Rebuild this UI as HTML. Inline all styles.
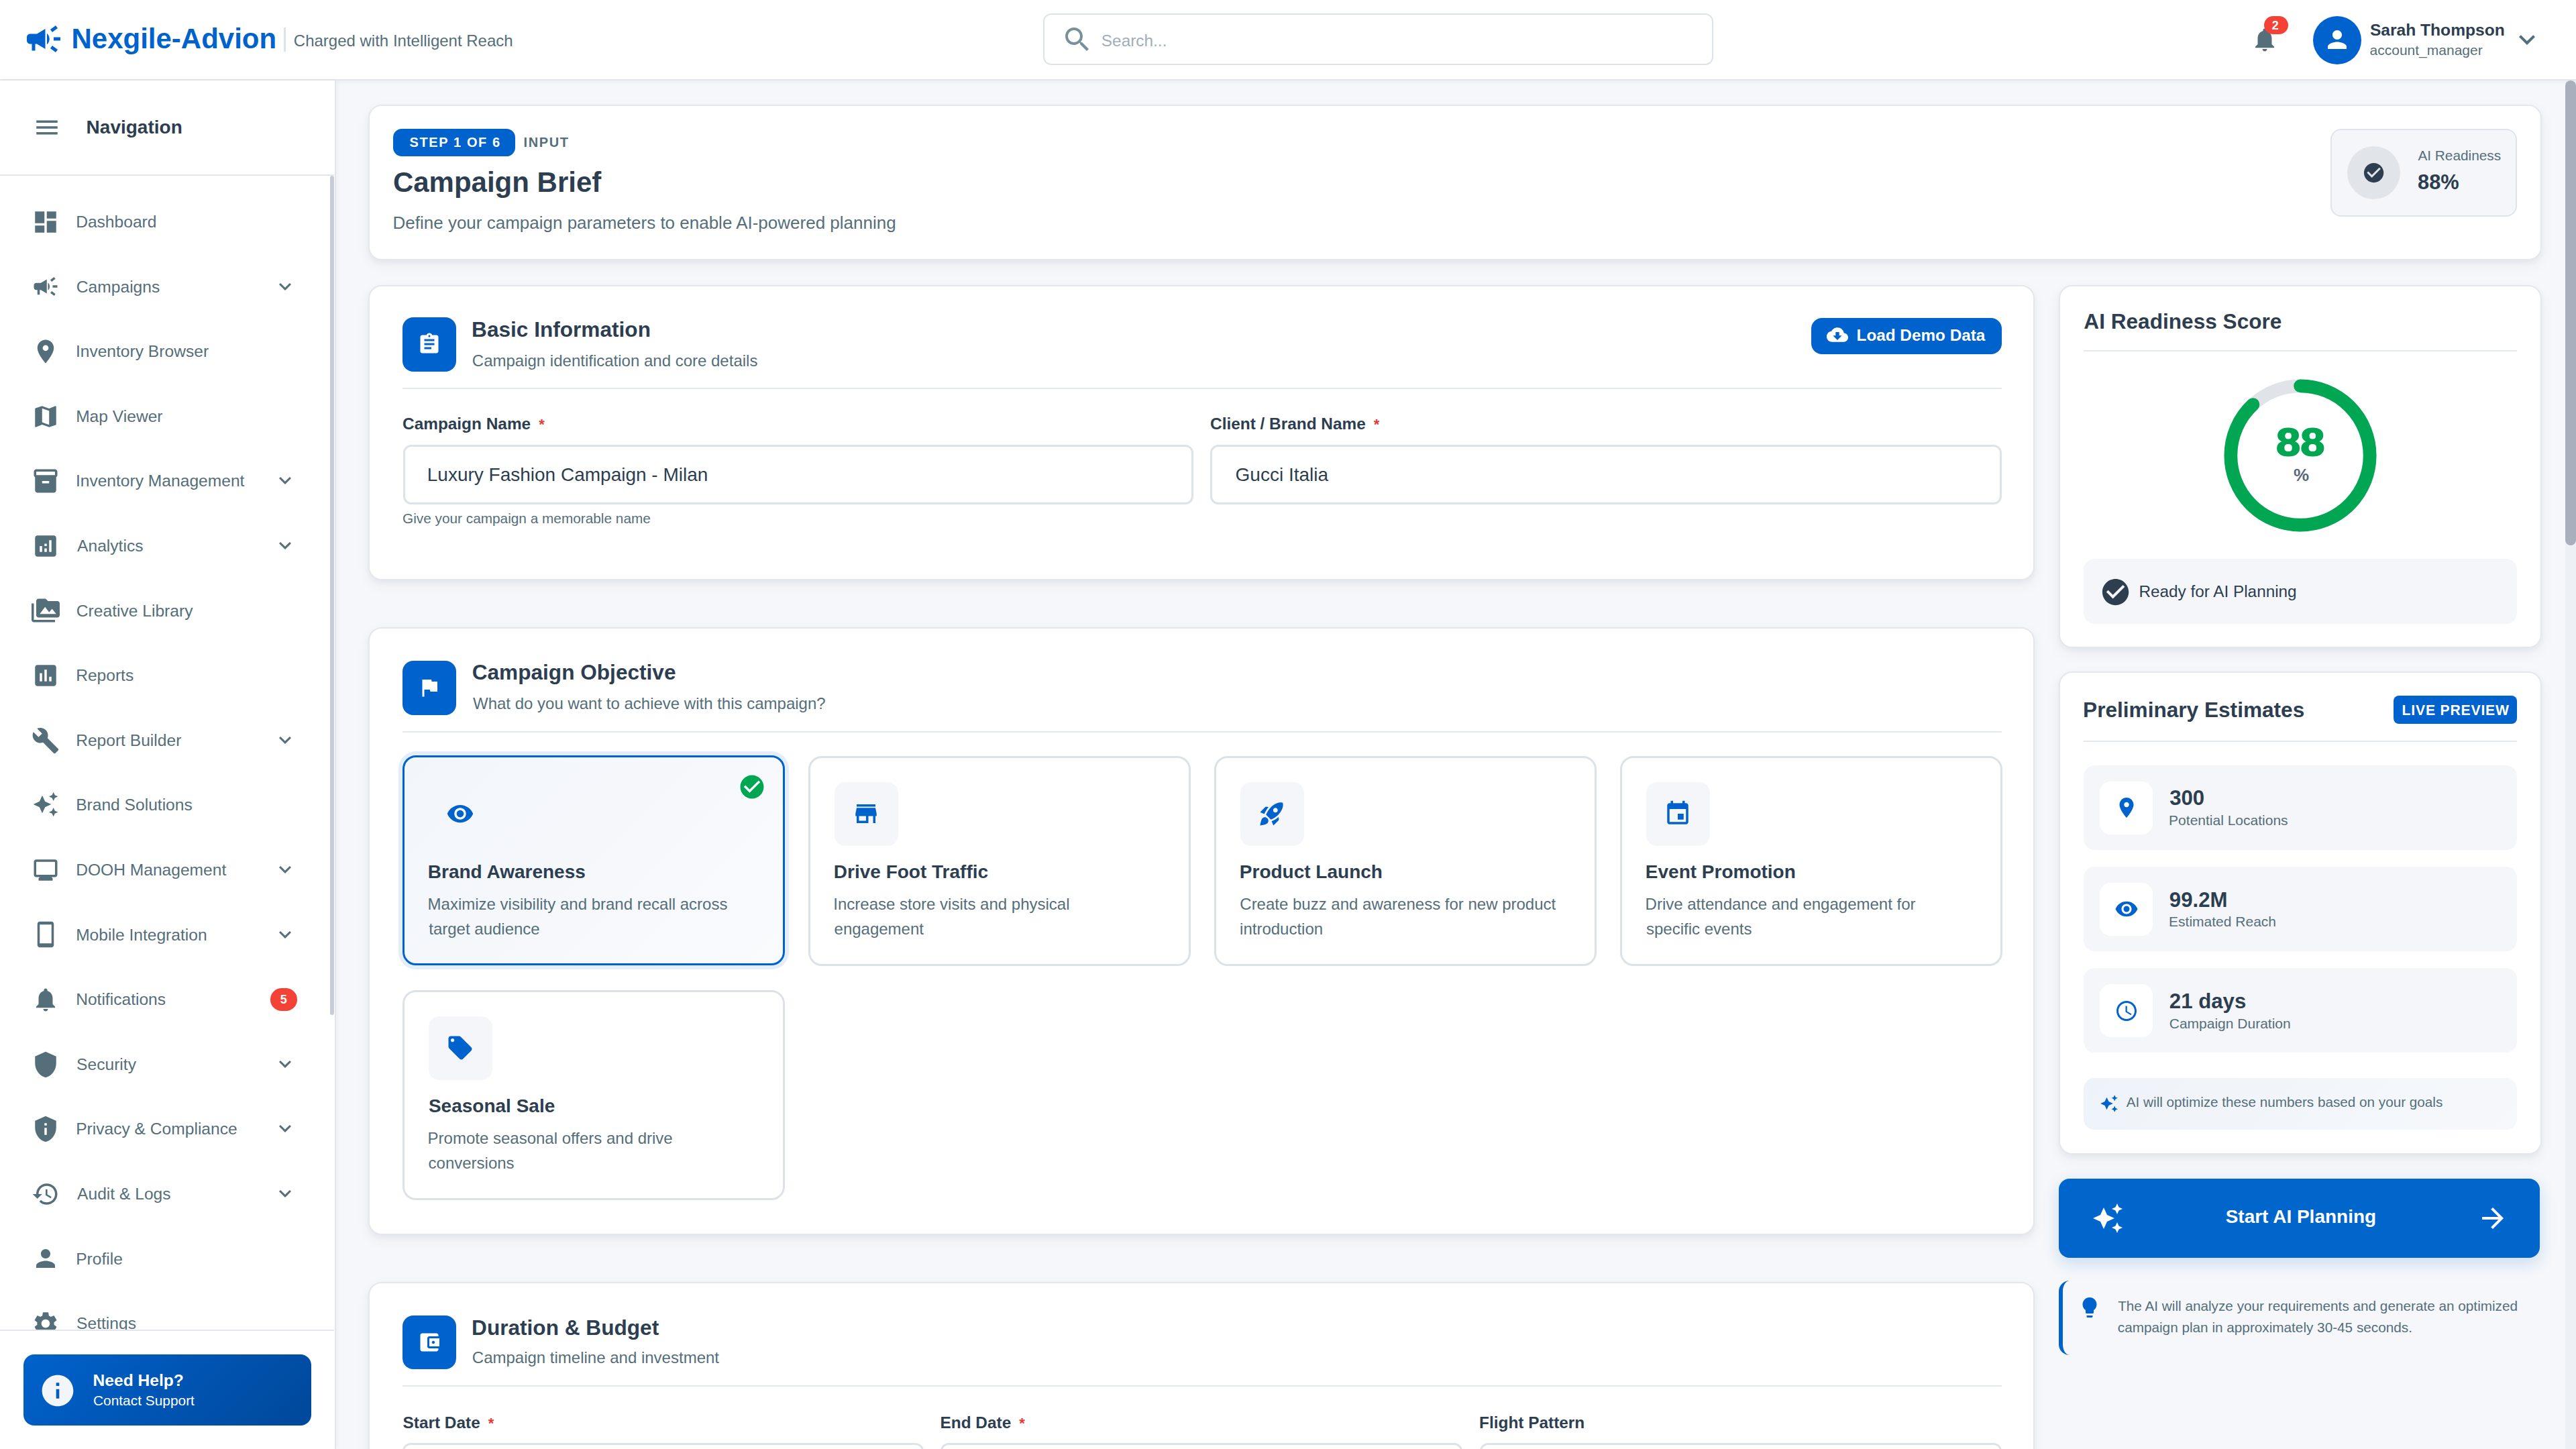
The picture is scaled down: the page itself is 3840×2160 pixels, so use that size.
<!DOCTYPE html>
<html><head><meta charset="utf-8">
<style>
@media (min-width: 3000px) { html { zoom: 2; } }
*{box-sizing:border-box;margin:0;padding:0}
html,body{width:1920px;height:1080px;overflow:hidden}
body{font-family:"Liberation Sans",sans-serif;background:#f5f7fa;position:relative}
svg{display:block}
</style></head><body>
<div style="position:absolute;left:0.00px;top:0.00px;width:1920.00px;height:60.00px;background:#fff;border-bottom:1px solid #e2e6ec;box-shadow:0 1px 4px rgba(40,50,70,.05)"></div>
<svg style="position:absolute;left:17.40px;top:14.00px" width="30" height="30" viewBox="0 0 24 24" fill="#0062cc"><path d="M18 11v2h4v-2h-4zm-2 6.61c.96.71 2.21 1.65 3.2 2.39.4-.53.8-1.07 1.2-1.6-.99-.74-2.24-1.68-3.2-2.4-.4.54-.8 1.08-1.2 1.61zM20.4 5.6c-.4-.53-.8-1.07-1.2-1.6-.99.74-2.24 1.68-3.2 2.4.4.53.8 1.07 1.2 1.6.96-.72 2.21-1.65 3.2-2.4zM4 9c-1.1 0-2 .9-2 2v2c0 1.1.9 2 2 2h1v4h2v-4h1l5 3V6L8 9H4zm11.5 3c0-1.33-.58-2.53-1.5-3.35v6.69c.92-.81 1.5-2.01 1.5-3.34z"/></svg>
<div style="position:absolute;left:53.24px;top:18.72px;font-size:21.0px;line-height:21.0px;font-weight:700;color:#0062cc;white-space:nowrap;">Nexgile-Advion</div>
<div style="position:absolute;left:211.60px;top:20.60px;width:1.20px;height:17.80px;background:#dde3e7"></div>
<div style="position:absolute;left:218.90px;top:24.34px;font-size:12.0px;line-height:12.0px;font-weight:400;color:#546e7a;white-space:nowrap;">Charged with Intelligent Reach</div>
<div style="position:absolute;left:777.70px;top:10.00px;width:499.20px;height:38.70px;background:#fff;border:1px solid #dde3ea;border-radius:6px"></div>
<svg style="position:absolute;left:791.20px;top:17.30px" width="24" height="24" viewBox="0 0 24 24" fill="#78909c"><path d="M15.5 14h-.79l-.28-.27C15.41 12.59 16 11.11 16 9.5 16 5.91 13.09 3 9.5 3S3 5.91 3 9.5 5.91 16 9.5 16c1.61 0 3.09-.59 4.23-1.57l.27.28v.79l5 4.99L20.49 19l-4.99-5zm-6 0C7.01 14 5 11.99 5 9.5S7.01 5 9.5 5 14 7.01 14 9.5 11.99 14 9.5 14z"/></svg>
<div style="position:absolute;left:820.91px;top:24.67px;font-size:12.2px;line-height:12.2px;font-weight:400;color:#a0aeb9;white-space:nowrap;">Search...</div>
<svg style="position:absolute;left:1677.40px;top:18.90px" width="21" height="21" viewBox="0 0 24 24" fill="#546e7a"><path d="M12 22c1.1 0 2-.9 2-2h-4c0 1.1.89 2 2 2zm6-6v-5c0-3.07-1.64-5.64-4.5-6.32V4c0-.83-.67-1.5-1.5-1.5s-1.5.67-1.5 1.5v.68C7.63 5.36 6 7.92 6 11v5l-2 2v1h16v-1l-2-2z"/></svg>
<div style="position:absolute;left:1687.30px;top:12.00px;width:18.30px;height:13.40px;background:#f44336;border-radius:7px"></div>
<div style="position:absolute;left:1693.43px;top:14.68px;font-size:9.0px;line-height:9.0px;font-weight:700;color:#fff;white-space:nowrap;">2</div>
<div style="position:absolute;left:1724.00px;top:12.00px;width:36.00px;height:36.00px;background:#0062cc;border-radius:50%"></div>
<svg style="position:absolute;left:1731.50px;top:19.00px" width="21" height="21" viewBox="0 0 24 24" fill="#fff"><path d="M12 12c2.21 0 4-1.79 4-4s-1.79-4-4-4-4 1.79-4 4 1.79 4 4 4zm0 2c-2.67 0-8 1.34-8 4v2h16v-2c0-2.66-5.33-4-8-4z"/></svg>
<div style="position:absolute;left:1766.45px;top:16.69px;font-size:12.3px;line-height:12.3px;font-weight:700;color:#2c3e50;white-space:nowrap;">Sarah Thompson</div>
<div style="position:absolute;left:1766.28px;top:31.91px;font-size:10.5px;line-height:10.5px;font-weight:400;color:#546e7a;white-space:nowrap;">account_manager</div>
<svg style="position:absolute;left:1871.70px;top:17.70px" width="24" height="24" viewBox="0 0 24 24" fill="#546e7a"><path d="M16.59 8.59 12 13.17 7.41 8.59 6 10l6 6 6-6z"/></svg>
<div style="position:absolute;left:0.00px;top:60.00px;width:250.50px;height:1020.00px;background:#fff;border-right:1px solid #e2e5ec;box-shadow:1px 0 4px rgba(30,40,60,.04)"></div>
<div style="position:absolute;left:0.00px;top:130.00px;width:249.00px;height:1.00px;background:#e3e7ed"></div>
<svg style="position:absolute;left:24.40px;top:84.50px" width="21" height="21" viewBox="0 0 24 24" fill="#546e7a"><path d="M3 18h18v-2H3v2zm0-5h18v-2H3v2zm0-7v2h18V6H3z"/></svg>
<div style="position:absolute;left:64.31px;top:88.15px;font-size:14.0px;line-height:14.0px;font-weight:700;color:#2c3e50;white-space:nowrap;">Navigation</div>
<div style="position:absolute;left:0;top:131px;width:249px;height:860px;overflow:hidden">
<svg style="position:absolute;left:23.60px;top:23.90px" width="21" height="21" viewBox="0 0 24 24" fill="#546e7a"><path d="M3 13h8V3H3v10zm0 8h8v-6H3v6zm10 0h8V11h-8v10zm0-18v6h8V3h-8z"/></svg>
<div style="position:absolute;left:56.57px;top:28.49px;font-size:12.3px;line-height:12.3px;font-weight:400;color:#546e7a;white-space:nowrap;">Dashboard</div>
<svg style="position:absolute;left:23.60px;top:72.20px" width="21" height="21" viewBox="0 0 24 24" fill="#546e7a"><path d="M18 11v2h4v-2h-4zm-2 6.61c.96.71 2.21 1.65 3.2 2.39.4-.53.8-1.07 1.2-1.6-.99-.74-2.24-1.68-3.2-2.4-.4.54-.8 1.08-1.2 1.61zM20.4 5.6c-.4-.53-.8-1.07-1.2-1.6-.99.74-2.24 1.68-3.2 2.4.4.53.8 1.07 1.2 1.6.96-.72 2.21-1.65 3.2-2.4zM4 9c-1.1 0-2 .9-2 2v2c0 1.1.9 2 2 2h1v4h2v-4h1l5 3V6L8 9H4zm11.5 3c0-1.33-.58-2.53-1.5-3.35v6.69c.92-.81 1.5-2.01 1.5-3.34z"/></svg>
<div style="position:absolute;left:56.93px;top:76.79px;font-size:12.3px;line-height:12.3px;font-weight:400;color:#546e7a;white-space:nowrap;">Campaigns</div>
<svg style="position:absolute;left:203.70px;top:73.30px" width="18" height="18" viewBox="0 0 24 24" fill="#546e7a"><path d="M16.59 8.59 12 13.17 7.41 8.59 6 10l6 6 6-6z"/></svg>
<svg style="position:absolute;left:23.60px;top:120.50px" width="21" height="21" viewBox="0 0 24 24" fill="#546e7a"><path d="M12 2C8.13 2 5 5.13 5 9c0 5.25 7 13 7 13s7-7.75 7-13c0-3.87-3.13-7-7-7zm0 9.5c-1.38 0-2.5-1.12-2.5-2.5s1.12-2.5 2.5-2.5 2.5 1.12 2.5 2.5-1.12 2.5-2.5 2.5z"/></svg>
<div style="position:absolute;left:56.44px;top:125.09px;font-size:12.3px;line-height:12.3px;font-weight:400;color:#546e7a;white-space:nowrap;">Inventory Browser</div>
<svg style="position:absolute;left:23.60px;top:168.80px" width="21" height="21" viewBox="0 0 24 24" fill="#546e7a"><path d="M20.5 3l-.16.03L15 5.1 9 3 3.36 4.9c-.21.07-.36.25-.36.48V20.5c0 .28.22.5.5.5l.16-.03L9 18.9l6 2.1 5.64-1.9c.21-.07.36-.25.36-.48V3.5c0-.28-.22-.5-.5-.5zM15 19l-6-2.11V5l6 2.11V19z"/></svg>
<div style="position:absolute;left:56.57px;top:173.39px;font-size:12.3px;line-height:12.3px;font-weight:400;color:#546e7a;white-space:nowrap;">Map Viewer</div>
<svg style="position:absolute;left:23.60px;top:217.10px" width="21" height="21" viewBox="0 0 24 24" fill="#546e7a"><path d="M20 2H4c-1 0-2 .9-2 2v3.01c0 .72.43 1.34 1 1.69V20c0 1.1 1.1 2 2 2h14c.9 0 2-.9 2-2V8.7c.57-.35 1-.97 1-1.69V4c0-1.1-1-2-2-2zm-5 12H9v-2h6v2zm5-7H4V4l16-.02V7z"/></svg>
<div style="position:absolute;left:56.44px;top:221.69px;font-size:12.3px;line-height:12.3px;font-weight:400;color:#546e7a;white-space:nowrap;">Inventory Management</div>
<svg style="position:absolute;left:203.70px;top:218.20px" width="18" height="18" viewBox="0 0 24 24" fill="#546e7a"><path d="M16.59 8.59 12 13.17 7.41 8.59 6 10l6 6 6-6z"/></svg>
<svg style="position:absolute;left:23.60px;top:265.40px" width="21" height="21" viewBox="0 0 24 24" fill="#546e7a"><path d="M19 3H5c-1.1 0-2 .9-2 2v14c0 1.1.9 2 2 2h14c1.1 0 2-.9 2-2V5c0-1.1-.9-2-2-2zM9 17H7v-5h2v5zm4 0h-2v-3h2v3zm0-5h-2v-2h2v2zm4 5h-2V7h2v10z"/></svg>
<div style="position:absolute;left:57.55px;top:269.99px;font-size:12.3px;line-height:12.3px;font-weight:400;color:#546e7a;white-space:nowrap;">Analytics</div>
<svg style="position:absolute;left:203.70px;top:266.50px" width="18" height="18" viewBox="0 0 24 24" fill="#546e7a"><path d="M16.59 8.59 12 13.17 7.41 8.59 6 10l6 6 6-6z"/></svg>
<svg style="position:absolute;left:23.60px;top:313.70px" width="21" height="21" viewBox="0 0 24 24" fill="#546e7a"><path d="M2 6H0v5h.01L0 20c0 1.1.9 2 2 2h18v-2H2V6zm20-2h-8l-2-2H6c-1.1 0-1.99.9-1.99 2L4 16c0 1.1.9 2 2 2h16c1.1 0 2-.9 2-2V6c0-1.1-.9-2-2-2zM7 15l4.5-6 3.5 4.51 2.5-3.01L21 15H7z"/></svg>
<div style="position:absolute;left:56.93px;top:318.29px;font-size:12.3px;line-height:12.3px;font-weight:400;color:#546e7a;white-space:nowrap;">Creative Library</div>
<svg style="position:absolute;left:23.60px;top:362.00px" width="21" height="21" viewBox="0 0 24 24" fill="#546e7a"><path d="M19 3H5c-1.1 0-2 .9-2 2v14c0 1.1.9 2 2 2h14c1.1 0 2-.9 2-2V5c0-1.1-.9-2-2-2zM9 17H7v-7h2v7zm4 0h-2V7h2v10zm4 0h-2v-4h2v4z"/></svg>
<div style="position:absolute;left:56.57px;top:366.59px;font-size:12.3px;line-height:12.3px;font-weight:400;color:#546e7a;white-space:nowrap;">Reports</div>
<svg style="position:absolute;left:23.60px;top:410.30px" width="21" height="21" viewBox="0 0 24 24" fill="#546e7a"><path d="M22.7 19l-9.1-9.1c.9-2.3.4-5-1.5-6.9-2-2-5-2.4-7.4-1.3L9 6 6 9 1.6 4.7C.4 7.1.9 10.1 2.9 12.1c1.9 1.9 4.6 2.4 6.9 1.5l9.1 9.1c.4.4 1 .4 1.4 0l2.3-2.3c.5-.4.5-1.1.1-1.4z"/></svg>
<div style="position:absolute;left:56.57px;top:414.89px;font-size:12.3px;line-height:12.3px;font-weight:400;color:#546e7a;white-space:nowrap;">Report Builder</div>
<svg style="position:absolute;left:203.70px;top:411.40px" width="18" height="18" viewBox="0 0 24 24" fill="#546e7a"><path d="M16.59 8.59 12 13.17 7.41 8.59 6 10l6 6 6-6z"/></svg>
<svg style="position:absolute;left:24.00px;top:458.40px" width="20" height="20" viewBox="0 0 24 24" fill="#546e7a"><path d="M19 9l1.25-2.75L23 5l-2.75-1.25L19 1l-1.25 2.75L15 5l2.75 1.25L19 9zm-7.5.5L9 4 6.5 9.5 1 12l5.5 2.5L9 20l2.5-5.5L17 12l-5.5-2.5zM19 15l-1.25 2.75L15 19l2.75 1.25L19 23l1.25-2.75L23 19l-2.75-1.25L19 15z"/></svg>
<div style="position:absolute;left:56.57px;top:463.19px;font-size:12.3px;line-height:12.3px;font-weight:400;color:#546e7a;white-space:nowrap;">Brand Solutions</div>
<svg style="position:absolute;left:23.60px;top:506.90px" width="21" height="21" viewBox="0 0 24 24" fill="#546e7a"><path d="M20 3H4c-1.1 0-2 .9-2 2v11c0 1.1.9 2 2 2h3l-1 1v2h12v-2l-1-1h3c1.1 0 2-.9 2-2V5c0-1.1-.9-2-2-2zm0 13H4V5h16v11z"/></svg>
<div style="position:absolute;left:56.57px;top:511.49px;font-size:12.3px;line-height:12.3px;font-weight:400;color:#546e7a;white-space:nowrap;">DOOH Management</div>
<svg style="position:absolute;left:203.70px;top:508.00px" width="18" height="18" viewBox="0 0 24 24" fill="#546e7a"><path d="M16.59 8.59 12 13.17 7.41 8.59 6 10l6 6 6-6z"/></svg>
<svg style="position:absolute;left:23.60px;top:555.20px" width="21" height="21" viewBox="0 0 24 24" fill="#546e7a"><path d="M17 1.01L7 1c-1.1 0-2 .9-2 2v18c0 1.1.9 2 2 2h10c1.1 0 2-.9 2-2V3c0-1.1-.9-1.99-2-1.99zM17 19.5H7V3.5h10v16z"/></svg>
<div style="position:absolute;left:56.57px;top:559.79px;font-size:12.3px;line-height:12.3px;font-weight:400;color:#546e7a;white-space:nowrap;">Mobile Integration</div>
<svg style="position:absolute;left:203.70px;top:556.30px" width="18" height="18" viewBox="0 0 24 24" fill="#546e7a"><path d="M16.59 8.59 12 13.17 7.41 8.59 6 10l6 6 6-6z"/></svg>
<svg style="position:absolute;left:23.60px;top:603.50px" width="21" height="21" viewBox="0 0 24 24" fill="#546e7a"><path d="M12 22c1.1 0 2-.9 2-2h-4c0 1.1.89 2 2 2zm6-6v-5c0-3.07-1.64-5.64-4.5-6.32V4c0-.83-.67-1.5-1.5-1.5s-1.5.67-1.5 1.5v.68C7.63 5.36 6 7.92 6 11v5l-2 2v1h16v-1l-2-2z"/></svg>
<div style="position:absolute;left:56.57px;top:608.09px;font-size:12.3px;line-height:12.3px;font-weight:400;color:#546e7a;white-space:nowrap;">Notifications</div>
<div style="position:absolute;left:201.50px;top:605.60px;width:20.00px;height:16.80px;background:#f44336;border-radius:8.4px"></div>
<div style="position:absolute;left:208.83px;top:609.68px;font-size:9.0px;line-height:9.0px;font-weight:700;color:#fff;white-space:nowrap;">5</div>
<svg style="position:absolute;left:23.60px;top:651.80px" width="21" height="21" viewBox="0 0 24 24" fill="#546e7a"><path d="M12 1L3 5v6c0 5.55 3.84 10.74 9 12 5.16-1.26 9-6.45 9-12V5l-9-4z"/></svg>
<div style="position:absolute;left:57.06px;top:656.39px;font-size:12.3px;line-height:12.3px;font-weight:400;color:#546e7a;white-space:nowrap;">Security</div>
<svg style="position:absolute;left:203.70px;top:652.90px" width="18" height="18" viewBox="0 0 24 24" fill="#546e7a"><path d="M16.59 8.59 12 13.17 7.41 8.59 6 10l6 6 6-6z"/></svg>
<svg style="position:absolute;left:23.60px;top:700.10px" width="21" height="21" viewBox="0 0 24 24" fill="#546e7a"><path d="M12 1L3 5v6c0 5.55 3.84 10.74 9 12 5.16-1.26 9-6.45 9-12V5l-9-4zm1 16h-2v-6h2v6zm0-8h-2V7h2v2z"/></svg>
<div style="position:absolute;left:56.57px;top:704.69px;font-size:12.3px;line-height:12.3px;font-weight:400;color:#546e7a;white-space:nowrap;">Privacy &amp; Compliance</div>
<svg style="position:absolute;left:203.70px;top:701.20px" width="18" height="18" viewBox="0 0 24 24" fill="#546e7a"><path d="M16.59 8.59 12 13.17 7.41 8.59 6 10l6 6 6-6z"/></svg>
<svg style="position:absolute;left:23.60px;top:748.40px" width="21" height="21" viewBox="0 0 24 24" fill="#546e7a"><path d="M13 3c-4.97 0-9 4.03-9 9H1l3.89 3.89.07.14L9 12H6c0-3.87 3.13-7 7-7s7 3.13 7 7-3.13 7-7 7c-1.93 0-3.68-.79-4.94-2.06l-1.42 1.42C8.27 19.99 10.51 21 13 21c4.97 0 9-4.03 9-9s-4.03-9-9-9zm-1 5v5l4.28 2.54.72-1.21-3.5-2.08V8H12z"/></svg>
<div style="position:absolute;left:57.55px;top:752.99px;font-size:12.3px;line-height:12.3px;font-weight:400;color:#546e7a;white-space:nowrap;">Audit &amp; Logs</div>
<svg style="position:absolute;left:203.70px;top:749.50px" width="18" height="18" viewBox="0 0 24 24" fill="#546e7a"><path d="M16.59 8.59 12 13.17 7.41 8.59 6 10l6 6 6-6z"/></svg>
<svg style="position:absolute;left:23.60px;top:796.70px" width="21" height="21" viewBox="0 0 24 24" fill="#546e7a"><path d="M12 12c2.21 0 4-1.79 4-4s-1.79-4-4-4-4 1.79-4 4 1.79 4 4 4zm0 2c-2.67 0-8 1.34-8 4v2h16v-2c0-2.66-5.33-4-8-4z"/></svg>
<div style="position:absolute;left:56.57px;top:801.29px;font-size:12.3px;line-height:12.3px;font-weight:400;color:#546e7a;white-space:nowrap;">Profile</div>
<svg style="position:absolute;left:23.60px;top:845.00px" width="21" height="21" viewBox="0 0 24 24" fill="#546e7a"><path d="M19.14 12.94c.04-.3.06-.61.06-.94 0-.32-.02-.64-.07-.94l2.03-1.58c.18-.14.23-.41.12-.61l-1.92-3.32c-.12-.22-.37-.29-.59-.22l-2.39.96c-.5-.38-1.03-.7-1.62-.94l-.36-2.54c-.04-.24-.24-.41-.48-.41h-3.84c-.24 0-.43.17-.47.41l-.36 2.54c-.59.24-1.13.57-1.62.94l-2.39-.96c-.22-.08-.47 0-.59.22L2.74 8.87c-.12.21-.08.47.12.61l2.03 1.58c-.05.3-.09.63-.09.94s.02.64.07.94l-2.03 1.58c-.18.14-.23.41-.12.61l1.92 3.32c.12.22.37.29.59.22l2.39-.96c.5.38 1.03.7 1.62.94l.36 2.54c.05.24.24.41.48.41h3.84c.24 0 .44-.17.47-.41l.36-2.54c.59-.24 1.13-.56 1.62-.94l2.39.96c.22.08.47 0 .59-.22l1.92-3.32c.12-.22.07-.47-.12-.61l-2.01-1.58zM12 15.6c-1.98 0-3.6-1.62-3.6-3.6s1.62-3.6 3.6-3.6 3.6 1.62 3.6 3.6-1.62 3.6-3.6 3.6z"/></svg>
<div style="position:absolute;left:57.06px;top:849.59px;font-size:12.3px;line-height:12.3px;font-weight:400;color:#546e7a;white-space:nowrap;">Settings</div>
</div>
<div style="position:absolute;left:245.80px;top:131.00px;width:3.20px;height:625.50px;background:#c7ccd6;border-radius:2px"></div>
<div style="position:absolute;left:0.00px;top:991.00px;width:249.00px;height:1.00px;background:#e3e7ed"></div>
<div style="position:absolute;left:17.50px;top:1009.50px;width:214.50px;height:53.00px;border-radius:8px;background:linear-gradient(135deg,#0062cc 0%,#00489a 100%)"></div>
<svg style="position:absolute;left:29.15px;top:1022.30px" width="28" height="28" viewBox="0 0 24 24" fill="#f2f6fb"><path d="M12 2C6.48 2 2 6.48 2 12s4.48 10 10 10 10-4.48 10-10S17.52 2 12 2zm1 15h-2v-6h2v6zm0-8h-2V7h2v2z"/></svg>
<div style="position:absolute;left:69.26px;top:1022.99px;font-size:12.3px;line-height:12.3px;font-weight:700;color:#fff;white-space:nowrap;">Need Help?</div>
<div style="position:absolute;left:69.48px;top:1038.75px;font-size:10.45px;line-height:10.45px;font-weight:400;color:#fff;white-space:nowrap;">Contact Support</div>
<div style="position:absolute;left:274.70px;top:77.75px;width:1620.00px;height:116.25px;background:#fff;border:1px solid #e4e8ee;border-radius:10px;box-shadow:0 2px 4px rgba(20,30,50,.05),0 4px 12px rgba(20,30,50,.04)"></div>
<div style="position:absolute;left:292.85px;top:95.95px;width:91.25px;height:20.80px;background:#0062cc;border-radius:6.5px"></div>
<div style="position:absolute;left:305.30px;top:101.13px;font-size:10.0px;line-height:10.0px;font-weight:700;color:#fff;white-space:nowrap;letter-spacing:0.8px;">STEP 1 OF 6</div>
<div style="position:absolute;left:390.25px;top:101.13px;font-size:10.0px;line-height:10.0px;font-weight:700;color:#546e7a;white-space:nowrap;letter-spacing:0.8px;">INPUT</div>
<div style="position:absolute;left:292.96px;top:125.67px;font-size:21.0px;line-height:21.0px;font-weight:700;color:#2c3e50;white-space:nowrap;">Campaign Brief</div>
<div style="position:absolute;left:292.76px;top:159.39px;font-size:13.0px;line-height:13.0px;font-weight:400;color:#546e7a;white-space:nowrap;">Define your campaign parameters to enable AI-powered planning</div>
<div style="position:absolute;left:1737.00px;top:96.00px;width:138.75px;height:65.25px;background:#f4f6f9;border:1px solid #dfe4ec;border-radius:8px"></div>
<div style="position:absolute;left:1749.50px;top:108.90px;width:39.60px;height:39.60px;background:#e1e5ea;border-radius:50%"></div>
<svg style="position:absolute;left:1760.50px;top:119.90px" width="17.6" height="17.6" viewBox="0 0 24 24" fill="#2c3e50"><path d="M12 2C6.48 2 2 6.48 2 12s4.48 10 10 10 10-4.48 10-10S17.52 2 12 2zm-2 15-5-5 1.41-1.41L10 14.17l7.59-7.59L19 8l-9 9z"/></svg>
<div style="position:absolute;left:1802.20px;top:111.19px;font-size:10.4px;line-height:10.4px;font-weight:400;color:#546e7a;white-space:nowrap;">AI Readiness</div>
<div style="position:absolute;left:1802.04px;top:128.56px;font-size:15.4px;line-height:15.4px;font-weight:700;color:#2c3e50;white-space:nowrap;">88%</div>
<div style="position:absolute;left:274.60px;top:212.50px;width:1241.80px;height:220.20px;background:#fff;border:1px solid #e4e8ee;border-radius:10px;box-shadow:0 2px 4px rgba(20,30,50,.05),0 4px 12px rgba(20,30,50,.04)"></div>
<div style="position:absolute;left:300.00px;top:236.60px;width:40.00px;height:40.20px;background:#0062cc;border-radius:8px"></div>
<svg style="position:absolute;left:311.00px;top:247.65px" width="18" height="18" viewBox="0 0 24 24" fill="#fff"><path d="M19 3h-4.18C14.4 1.84 13.3 1 12 1c-1.3 0-2.4.84-2.82 2H5c-1.1 0-2 .9-2 2v14c0 1.1.9 2 2 2h14c1.1 0 2-.9 2-2V5c0-1.1-.9-2-2-2zm-7 0c.55 0 1 .45 1 1s-.45 1-1 1-1-.45-1-1 .45-1 1-1zm2 14H7v-2h7v2zm3-4H7v-2h10v2zm0-4H7V7h10v2z"/></svg>
<div style="position:absolute;left:351.55px;top:237.82px;font-size:15.8px;line-height:15.8px;font-weight:700;color:#2c3e50;white-space:nowrap;">Basic Information</div>
<div style="position:absolute;left:351.90px;top:263.04px;font-size:12.0px;line-height:12.0px;font-weight:400;color:#546e7a;white-space:nowrap;">Campaign identification and core details</div>
<div style="position:absolute;left:1349.75px;top:236.80px;width:142.25px;height:27.20px;background:#0062cc;border-radius:8px"></div>
<svg style="position:absolute;left:1361.60px;top:241.60px" width="16" height="16" viewBox="0 0 24 24" fill="#fff"><path d="M19.35 10.04C18.67 6.59 15.64 4 12 4 9.11 4 6.6 5.64 5.35 8.04 2.34 8.36 0 10.91 0 14c0 3.31 2.69 6 6 6h13c2.76 0 5-2.24 5-5 0-2.64-2.05-4.78-4.65-4.96zM17 13l-5 5-5-5h3V9h4v4h3z"/></svg>
<div style="position:absolute;left:1383.77px;top:244.10px;font-size:12.16px;line-height:12.16px;font-weight:700;color:#fff;white-space:nowrap;">Load Demo Data</div>
<div style="position:absolute;left:300.00px;top:289.00px;width:1192.00px;height:1.00px;background:#e3e8ee"></div>
<div style="position:absolute;left:300.01px;top:309.97px;font-size:12.2px;line-height:12.2px;font-weight:700;color:#2c3e50;white-space:nowrap;">Campaign Name<span style="color:#e53935;margin-left:6px;font-size:11px">*</span></div>
<div style="position:absolute;left:902.01px;top:309.97px;font-size:12.2px;line-height:12.2px;font-weight:700;color:#2c3e50;white-space:nowrap;">Client / Brand Name<span style="color:#e53935;margin-left:6px;font-size:11px">*</span></div>
<div style="position:absolute;left:300.30px;top:331.50px;width:589.20px;height:44.50px;background:#fff;border:1.5px solid #dde3e9;border-radius:6px"></div>
<div style="position:absolute;left:902.00px;top:331.50px;width:589.90px;height:44.50px;background:#fff;border:1.5px solid #dde3e9;border-radius:6px"></div>
<div style="position:absolute;left:318.38px;top:347.15px;font-size:14.0px;line-height:14.0px;font-weight:400;color:#2c3e50;white-space:nowrap;">Luxury Fashion Campaign - Milan</div>
<div style="position:absolute;left:920.80px;top:347.15px;font-size:14.0px;line-height:14.0px;font-weight:400;color:#2c3e50;white-space:nowrap;">Gucci Italia</div>
<div style="position:absolute;left:299.98px;top:381.69px;font-size:10.4px;line-height:10.4px;font-weight:400;color:#546e7a;white-space:nowrap;">Give your campaign a memorable name</div>
<div style="position:absolute;left:1534.50px;top:212.50px;width:360.00px;height:270.30px;background:#fff;border:1px solid #e4e8ee;border-radius:10px;box-shadow:0 2px 4px rgba(20,30,50,.05),0 4px 12px rgba(20,30,50,.04)"></div>
<div style="position:absolute;left:1553.18px;top:231.92px;font-size:15.8px;line-height:15.8px;font-weight:700;color:#2c3e50;white-space:nowrap;">AI Readiness Score</div>
<div style="position:absolute;left:1553.00px;top:261.00px;width:323.00px;height:1.00px;background:#e3e8f2"></div>
<svg style="position:absolute;left:1654.3px;top:279.3px" width="120" height="120" viewBox="0 0 120 120"><circle cx="60" cy="60" r="51.825" fill="none" stroke="#e0e4e9" stroke-width="9.85"/><circle cx="60" cy="60" r="51.825" fill="none" stroke="#00a651" stroke-width="9.85" stroke-linecap="round" stroke-dasharray="286.551 325.626" transform="rotate(-90 60 60)"/></svg>
<div style="position:absolute;left:1696.64px;top:315.47px;font-size:28.5px;line-height:28.5px;font-weight:700;color:#00a651;white-space:nowrap;transform:scaleX(1.14);transform-origin:0 0;-webkit-text-stroke:0.9px #00a651;">88</div>
<div style="position:absolute;left:1709.44px;top:347.39px;font-size:13.0px;line-height:13.0px;font-weight:700;color:#58697a;white-space:nowrap;">%</div>
<div style="position:absolute;left:1553.00px;top:416.30px;width:323.00px;height:48.60px;background:#f4f6f9;border-radius:8px"></div>
<svg style="position:absolute;left:1564.80px;top:429.60px" width="23.6" height="23.6" viewBox="0 0 24 24" fill="#2c3e50"><path d="M12 2C6.48 2 2 6.48 2 12s4.48 10 10 10 10-4.48 10-10S17.52 2 12 2zm-2 15-5-5 1.41-1.41L10 14.17l7.59-7.59L19 8l-9 9z"/></svg>
<div style="position:absolute;left:1594.23px;top:435.20px;font-size:12.16px;line-height:12.16px;font-weight:400;color:#2c3e50;white-space:nowrap;">Ready for AI Planning</div>
<div style="position:absolute;left:1534.50px;top:500.50px;width:360.00px;height:360.20px;background:#fff;border:1px solid #e4e8ee;border-radius:10px;box-shadow:0 2px 4px rgba(20,30,50,.05),0 4px 12px rgba(20,30,50,.04)"></div>
<div style="position:absolute;left:1552.55px;top:521.32px;font-size:15.8px;line-height:15.8px;font-weight:700;color:#2c3e50;white-space:nowrap;">Preliminary Estimates</div>
<div style="position:absolute;left:1784.00px;top:518.50px;width:91.75px;height:21.20px;background:#0062cc;border-radius:4px"></div>
<div style="position:absolute;left:1790.26px;top:524.07px;font-size:10.6px;line-height:10.6px;font-weight:700;color:#fff;white-space:nowrap;letter-spacing:0.4px;">LIVE PREVIEW</div>
<div style="position:absolute;left:1553.00px;top:552.00px;width:323.00px;height:1.00px;background:#e3e8ee"></div>
<div style="position:absolute;left:1553.00px;top:570.25px;width:323.00px;height:63.30px;background:#f4f6f9;border-radius:8px"></div>
<div style="position:absolute;left:1565.00px;top:582.25px;width:39.60px;height:39.60px;background:#fff;border-radius:8px"></div>
<svg style="position:absolute;left:1575.80px;top:593.05px" width="18" height="18" viewBox="0 0 24 24" fill="#0062cc"><path d="M12 2C8.13 2 5 5.13 5 9c0 5.25 7 13 7 13s7-7.75 7-13c0-3.87-3.13-7-7-7zm0 9.5c-1.38 0-2.5-1.12-2.5-2.5s1.12-2.5 2.5-2.5 2.5 1.12 2.5 2.5-1.12 2.5-2.5 2.5z"/></svg>
<div style="position:absolute;left:1617.09px;top:587.24px;font-size:15.6px;line-height:15.6px;font-weight:700;color:#2c3e50;white-space:nowrap;">300</div>
<div style="position:absolute;left:1616.56px;top:606.11px;font-size:10.5px;line-height:10.5px;font-weight:400;color:#546e7a;white-space:nowrap;">Potential Locations</div>
<div style="position:absolute;left:1553.00px;top:645.85px;width:323.00px;height:63.30px;background:#f4f6f9;border-radius:8px"></div>
<div style="position:absolute;left:1565.00px;top:657.85px;width:39.60px;height:39.60px;background:#fff;border-radius:8px"></div>
<svg style="position:absolute;left:1575.80px;top:668.65px" width="18" height="18" viewBox="0 0 24 24" fill="#0062cc"><path d="M12 4.5C7 4.5 2.73 7.61 1 12c1.73 4.39 6 7.5 11 7.5s9.27-3.11 11-7.5c-1.73-4.39-6-7.5-11-7.5zM12 17c-2.76 0-5-2.24-5-5s2.24-5 5-5 5 2.24 5 5-2.24 5-5 5zm0-8c-1.66 0-3 1.34-3 3s1.34 3 3 3 3-1.34 3-3-1.34-3-3-3z"/></svg>
<div style="position:absolute;left:1616.93px;top:662.84px;font-size:15.6px;line-height:15.6px;font-weight:700;color:#2c3e50;white-space:nowrap;">99.2M</div>
<div style="position:absolute;left:1616.56px;top:681.71px;font-size:10.5px;line-height:10.5px;font-weight:400;color:#546e7a;white-space:nowrap;">Estimated Reach</div>
<div style="position:absolute;left:1553.00px;top:721.45px;width:323.00px;height:63.30px;background:#f4f6f9;border-radius:8px"></div>
<div style="position:absolute;left:1565.00px;top:733.45px;width:39.60px;height:39.60px;background:#fff;border-radius:8px"></div>
<svg style="position:absolute;left:1575.80px;top:744.25px" width="18" height="18" viewBox="0 0 24 24" fill="#0062cc"><path d="M11.99 2C6.47 2 2 6.48 2 12s4.47 10 9.99 10C17.52 22 22 17.52 22 12S17.52 2 11.99 2zM12 20c-4.42 0-8-3.58-8-8s3.58-8 8-8 8 3.58 8 8-3.58 8-8 8zm.5-13H11v6l5.25 3.15.75-1.23-4.5-2.67z"/></svg>
<div style="position:absolute;left:1616.93px;top:738.44px;font-size:15.6px;line-height:15.6px;font-weight:700;color:#2c3e50;white-space:nowrap;">21 days</div>
<div style="position:absolute;left:1616.88px;top:757.31px;font-size:10.5px;line-height:10.5px;font-weight:400;color:#546e7a;white-space:nowrap;">Campaign Duration</div>
<div style="position:absolute;left:1553.00px;top:803.30px;width:323.00px;height:38.50px;background:linear-gradient(135deg,#eef3f9 0%,#f6f8fb 100%);border-radius:8px"></div>
<svg style="position:absolute;left:1564.90px;top:815.60px" width="14" height="14" viewBox="0 0 24 24" fill="#0062cc"><path d="M19 9l1.25-2.75L23 5l-2.75-1.25L19 1l-1.25 2.75L15 5l2.75 1.25L19 9zm-7.5.5L9 4 6.5 9.5 1 12l5.5 2.5L9 20l2.5-5.5L17 12l-5.5-2.5zM19 15l-1.25 2.75L15 19l2.75 1.25L19 23l1.25-2.75L23 19l-2.75-1.25L19 15z"/></svg>
<div style="position:absolute;left:1584.90px;top:816.64px;font-size:10.35px;line-height:10.35px;font-weight:400;color:#546e7a;white-space:nowrap;">AI will optimize these numbers based on your goals</div>
<div style="position:absolute;left:1534.50px;top:878.50px;width:358.50px;height:58.90px;background:#0066cc;border-radius:8px;box-shadow:0 4px 12px rgba(0,98,204,.18)"></div>
<svg style="position:absolute;left:1559.20px;top:895.95px" width="24" height="24" viewBox="0 0 24 24" fill="#fff"><path d="M19 9l1.25-2.75L23 5l-2.75-1.25L19 1l-1.25 2.75L15 5l2.75 1.25L19 9zm-7.5.5L9 4 6.5 9.5 1 12l5.5 2.5L9 20l2.5-5.5L17 12l-5.5-2.5zM19 15l-1.25 2.75L15 19l2.75 1.25L19 23l1.25-2.75L23 19l-2.75-1.25L19 15z"/></svg>
<div style="position:absolute;left:1658.82px;top:900.15px;font-size:14.0px;line-height:14.0px;font-weight:700;color:#fff;white-space:nowrap;">Start AI Planning</div>
<svg style="position:absolute;left:1845.90px;top:896.00px" width="24" height="24" viewBox="0 0 24 24" fill="#fff"><path d="M12 4l-1.41 1.41L16.17 11H4v2h12.17l-5.58 5.59L12 20l8-8z"/></svg>
<div style="position:absolute;left:1534.50px;top:954.30px;width:358.50px;height:55.70px;border-left:3px solid #0062cc;border-radius:8px"></div>
<svg style="position:absolute;left:1548.50px;top:965.70px" width="18" height="18" viewBox="0 0 24 24" fill="#0062cc"><path d="M9 21c0 .55.45 1 1 1h4c.55 0 1-.45 1-1v-1H9v1zm3-19C8.14 2 5 5.14 5 9c0 2.38 1.19 4.47 3 5.74V17c0 .55.45 1 1 1h6c.55 0 1-.45 1-1v-2.26c1.81-1.27 3-3.36 3-5.74 0-3.86-3.14-7-7-7z"/></svg>
<div style="position:absolute;left:1578.59px;top:968.62px;font-size:10.37px;line-height:10.37px;font-weight:400;color:#546e7a;white-space:nowrap;">The AI will analyze your requirements and generate an optimized</div>
<div style="position:absolute;left:1578.39px;top:984.42px;font-size:10.37px;line-height:10.37px;font-weight:400;color:#546e7a;white-space:nowrap;">campaign plan in approximately 30-45 seconds.</div>
<div style="position:absolute;left:274.60px;top:467.50px;width:1241.80px;height:453.20px;background:#fff;border:1px solid #e4e8ee;border-radius:10px;box-shadow:0 2px 4px rgba(20,30,50,.05),0 4px 12px rgba(20,30,50,.04)"></div>
<div style="position:absolute;left:300.00px;top:492.60px;width:40.00px;height:40.20px;background:#0062cc;border-radius:8px"></div>
<svg style="position:absolute;left:311.00px;top:503.60px" width="18" height="18" viewBox="0 0 24 24" fill="#fff"><path d="M14.4 6 14 4H5v17h2v-7h5.6l.4 2h7V6z"/></svg>
<div style="position:absolute;left:351.87px;top:493.62px;font-size:15.8px;line-height:15.8px;font-weight:700;color:#2c3e50;white-space:nowrap;">Campaign Objective</div>
<div style="position:absolute;left:352.50px;top:518.34px;font-size:12.0px;line-height:12.0px;font-weight:400;color:#546e7a;white-space:nowrap;">What do you want to achieve with this campaign?</div>
<div style="position:absolute;left:300.00px;top:545.00px;width:1192.00px;height:1.00px;background:#e3e8ee"></div>
<div style="position:absolute;left:300.00px;top:563.10px;width:285.00px;height:156.25px;border:1.5px solid #0062cc;border-radius:10px;background:linear-gradient(135deg,#f2f5fa 0%,#f9fbfd 100%);box-shadow:0 0 0 3px #e3eefa"></div>
<svg style="position:absolute;left:550.00px;top:576.20px" width="21" height="21" viewBox="0 0 24 24" fill="#00a651"><path d="M12 2C6.48 2 2 6.48 2 12s4.48 10 10 10 10-4.48 10-10S17.52 2 12 2zm-2 15-5-5 1.41-1.41L10 14.17l7.59-7.59L19 8l-9 9z"/></svg>
<svg style="position:absolute;left:332.65px;top:596.20px" width="21" height="21" viewBox="0 0 24 24" fill="#0062cc"><path d="M12 4.5C7 4.5 2.73 7.61 1 12c1.73 4.39 6 7.5 11 7.5s9.27-3.11 11-7.5c-1.73-4.39-6-7.5-11-7.5zM12 17c-2.76 0-5-2.24-5-5s2.24-5 5-5 5 2.24 5 5-2.24 5-5 5zm0-8c-1.66 0-3 1.34-3 3s1.34 3 3 3 3-1.34 3-3-1.34-3-3-3z"/></svg>
<div style="position:absolute;left:318.91px;top:643.15px;font-size:14.0px;line-height:14.0px;font-weight:700;color:#2c3e50;white-space:nowrap;">Brand Awareness</div>
<div style="position:absolute;left:318.79px;top:668.24px;font-size:12.0px;line-height:12.0px;font-weight:400;color:#546e7a;white-space:nowrap;">Maximize visibility and brand recall across</div>
<div style="position:absolute;left:319.63px;top:686.64px;font-size:12.0px;line-height:12.0px;font-weight:400;color:#546e7a;white-space:nowrap;">target audience</div>
<div style="position:absolute;left:602.50px;top:563.50px;width:285.00px;height:156.25px;border:1.5px solid #dde2e8;border-radius:10px;background:#fff"></div>
<div style="position:absolute;left:621.75px;top:582.80px;width:47.75px;height:47.75px;background:#f4f6f9;border-radius:8px"></div>
<svg style="position:absolute;left:635.15px;top:596.20px" width="21" height="21" viewBox="0 0 24 24" fill="#0062cc"><path d="M20 4H4v2h16V4zm1 10v-2l-1-5H4l-1 5v2h1v6h10v-6h4v6h2v-6h1zm-9 4H6v-4h6v4z"/></svg>
<div style="position:absolute;left:621.41px;top:643.15px;font-size:14.0px;line-height:14.0px;font-weight:700;color:#2c3e50;white-space:nowrap;">Drive Foot Traffic</div>
<div style="position:absolute;left:621.17px;top:668.24px;font-size:12.0px;line-height:12.0px;font-weight:400;color:#546e7a;white-space:nowrap;">Increase store visits and physical</div>
<div style="position:absolute;left:621.77px;top:686.64px;font-size:12.0px;line-height:12.0px;font-weight:400;color:#546e7a;white-space:nowrap;">engagement</div>
<div style="position:absolute;left:905.00px;top:563.50px;width:285.00px;height:156.25px;border:1.5px solid #dde2e8;border-radius:10px;background:#fff"></div>
<div style="position:absolute;left:924.25px;top:582.80px;width:47.75px;height:47.75px;background:#f4f6f9;border-radius:8px"></div>
<svg style="position:absolute;left:937.65px;top:596.20px" width="21" height="21" viewBox="0 0 24 24" fill="#0062cc"><path d="M9.19 6.35c-2.04 2.29-3.44 5.58-3.57 5.89L2 10.69l4.05-4.05c.47-.47 1.15-.68 1.81-.55l1.33.26zM11.17 17s3.74-1.55 5.89-3.7c5.4-5.4 4.5-9.62 4.21-10.57-.95-.3-5.17-1.19-10.57 4.21C8.55 9.09 7 12.83 7 12.83L11.17 17zm6.48-2.19c-2.29 2.04-5.58 3.44-5.89 3.57L13.31 22l4.05-4.05c.47-.47.68-1.15.55-1.81l-.26-1.33zM9 18c0 .83-.34 1.58-.88 2.12C6.94 21.3 2 22 2 22s.7-4.94 1.88-6.12C4.42 15.34 5.17 15 6 15c1.66 0 3 1.34 3 3zm4-9c0-1.1.9-2 2-2s2 .9 2 2-.9 2-2 2-2-.9-2-2z"/></svg>
<div style="position:absolute;left:923.91px;top:643.15px;font-size:14.0px;line-height:14.0px;font-weight:700;color:#2c3e50;white-space:nowrap;">Product Launch</div>
<div style="position:absolute;left:924.15px;top:668.24px;font-size:12.0px;line-height:12.0px;font-weight:400;color:#546e7a;white-space:nowrap;">Create buzz and awareness for new product</div>
<div style="position:absolute;left:924.03px;top:686.64px;font-size:12.0px;line-height:12.0px;font-weight:400;color:#546e7a;white-space:nowrap;">introduction</div>
<div style="position:absolute;left:1207.50px;top:563.50px;width:285.00px;height:156.25px;border:1.5px solid #dde2e8;border-radius:10px;background:#fff"></div>
<div style="position:absolute;left:1226.75px;top:582.80px;width:47.75px;height:47.75px;background:#f4f6f9;border-radius:8px"></div>
<svg style="position:absolute;left:1240.15px;top:596.20px" width="21" height="21" viewBox="0 0 24 24" fill="#0062cc"><path d="M17 12h-5v5h5v-5zM16 1v2H8V1H6v2H5c-1.11 0-1.99.9-1.99 2L3 19c0 1.1.89 2 2 2h14c1.1 0 2-.9 2-2V5c0-1.1-.9-2-2-2h-1V1h-2zm3 18H5V8h14v11z"/></svg>
<div style="position:absolute;left:1226.41px;top:643.15px;font-size:14.0px;line-height:14.0px;font-weight:700;color:#2c3e50;white-space:nowrap;">Event Promotion</div>
<div style="position:absolute;left:1226.29px;top:668.24px;font-size:12.0px;line-height:12.0px;font-weight:400;color:#546e7a;white-space:nowrap;">Drive attendance and engagement for</div>
<div style="position:absolute;left:1227.01px;top:686.64px;font-size:12.0px;line-height:12.0px;font-weight:400;color:#546e7a;white-space:nowrap;">specific events</div>
<div style="position:absolute;left:300.00px;top:738.00px;width:285.00px;height:156.25px;border:1.5px solid #dde2e8;border-radius:10px;background:#fff"></div>
<div style="position:absolute;left:319.25px;top:757.30px;width:47.75px;height:47.75px;background:#f4f6f9;border-radius:8px"></div>
<svg style="position:absolute;left:332.65px;top:770.70px" width="21" height="21" viewBox="0 0 24 24" fill="#0062cc"><path d="M21.41 11.58l-9-9C12.05 2.22 11.55 2 11 2H4c-1.1 0-2 .9-2 2v7c0 .55.22 1.05.59 1.42l9 9c.36.36.86.58 1.41.58.55 0 1.05-.22 1.41-.59l7-7c.37-.36.59-.86.59-1.41 0-.55-.23-1.06-.59-1.42zM5.5 7C4.67 7 4 6.33 4 5.5S4.67 4 5.5 4 7 4.67 7 5.5 6.33 7 5.5 7z"/></svg>
<div style="position:absolute;left:319.47px;top:817.65px;font-size:14.0px;line-height:14.0px;font-weight:700;color:#2c3e50;white-space:nowrap;">Seasonal Sale</div>
<div style="position:absolute;left:318.79px;top:842.74px;font-size:12.0px;line-height:12.0px;font-weight:400;color:#546e7a;white-space:nowrap;">Promote seasonal offers and drive</div>
<div style="position:absolute;left:319.27px;top:861.14px;font-size:12.0px;line-height:12.0px;font-weight:400;color:#546e7a;white-space:nowrap;">conversions</div>
<div style="position:absolute;left:274.60px;top:955.50px;width:1241.80px;height:300.00px;background:#fff;border:1px solid #e4e8ee;border-radius:10px;box-shadow:0 2px 4px rgba(20,30,50,.05),0 4px 12px rgba(20,30,50,.04)"></div>
<div style="position:absolute;left:300.00px;top:980.40px;width:40.00px;height:40.20px;background:#0062cc;border-radius:8px"></div>
<svg style="position:absolute;left:311.00px;top:991.50px" width="18" height="18" viewBox="0 0 24 24" fill="#fff"><path d="M21 18v1c0 1.1-.9 2-2 2H5c-1.11 0-2-.9-2-2V5c0-1.1.89-2 2-2h14c1.1 0 2 .9 2 2v1h-9c-1.11 0-2 .9-2 2v8c0 1.1.89 2 2 2h9zm-9-2h10V8H12v8zm4-2.5c-.83 0-1.5-.67-1.5-1.5s.67-1.5 1.5-1.5 1.5.67 1.5 1.5-.67 1.5-1.5 1.5z"/></svg>
<div style="position:absolute;left:351.55px;top:982.02px;font-size:15.8px;line-height:15.8px;font-weight:700;color:#2c3e50;white-space:nowrap;">Duration &amp; Budget</div>
<div style="position:absolute;left:351.90px;top:1006.04px;font-size:12.0px;line-height:12.0px;font-weight:400;color:#546e7a;white-space:nowrap;">Campaign timeline and investment</div>
<div style="position:absolute;left:300.00px;top:1032.50px;width:1192.00px;height:1.00px;background:#e3e8ee"></div>
<div style="position:absolute;left:300.26px;top:1054.37px;font-size:12.2px;line-height:12.2px;font-weight:700;color:#2c3e50;white-space:nowrap;">Start Date<span style="color:#e53935;margin-left:6px;font-size:11px">*</span></div>
<div style="position:absolute;left:700.77px;top:1054.37px;font-size:12.2px;line-height:12.2px;font-weight:700;color:#2c3e50;white-space:nowrap;">End Date<span style="color:#e53935;margin-left:6px;font-size:11px">*</span></div>
<div style="position:absolute;left:1102.52px;top:1054.37px;font-size:12.2px;line-height:12.2px;font-weight:700;color:#2c3e50;white-space:nowrap;">Flight Pattern</div>
<div style="position:absolute;left:300.00px;top:1075.40px;width:388.25px;height:44.50px;background:#fff;border:1.5px solid #dde3e9;border-radius:6px"></div>
<div style="position:absolute;left:701.00px;top:1075.40px;width:388.80px;height:44.50px;background:#fff;border:1.5px solid #dde3e9;border-radius:6px"></div>
<div style="position:absolute;left:1102.75px;top:1075.40px;width:389.15px;height:44.50px;background:#fff;border:1.5px solid #dde3e9;border-radius:6px"></div>
<div style="position:absolute;left:1912.00px;top:60.00px;width:8.00px;height:1020.00px;background:#edf0f4"></div>
<div style="position:absolute;left:1912.00px;top:60.00px;width:8.00px;height:346.40px;background:#a9b0bd;border-radius:4px"></div>
</body></html>
